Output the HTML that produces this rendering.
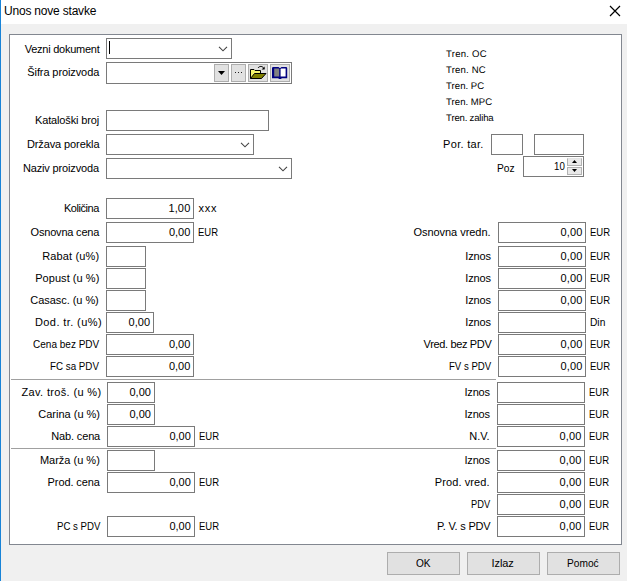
<!DOCTYPE html>
<html lang="sr"><head><meta charset="utf-8"><title>Unos nove stavke</title>
<style>
html,body{margin:0;padding:0}
body{width:627px;height:581px;overflow:hidden;background:#f0f0f0;position:relative;font-family:'Liberation Sans', sans-serif;color:#000}
.a{position:absolute;display:block}
.t{position:absolute;white-space:pre;line-height:20px;height:20px;transform-origin:0 0}
.f{position:absolute;box-sizing:border-box;background:#fff;border:1px solid #7a7a7a}
.b{position:absolute;box-sizing:border-box;background:#e1e1e1;border:1px solid #adadad}
.g{position:absolute;box-sizing:border-box;background:#d9d9d9;border:1px solid #e4e4e4}
.l{position:absolute;height:1px;background:#a0a0a0}
</style></head>
<body>
<div class="a" style="left:0;top:0;width:627px;height:24px;background:#fff"></div>
<div class="a" style="left:0;top:0;width:1px;height:581px;background:#1883d7"></div>
<svg class="a" style="left:608px;top:4px" width="14" height="14" viewBox="0 0 14 14"><path d="M2 2 L12 12 M12 2 L2 12" stroke="#000" stroke-width="1.2" fill="none"/></svg>
<div class="a" style="left:9px;top:34px;width:613px;height:511px;box-sizing:border-box;background:#fff;border:1px solid #828790"></div>
<div class="l" style="left:11px;top:379px;width:485px"></div>
<div class="l" style="left:11px;top:448px;width:485px"></div>
<div class="f" style="left:106px;top:38px;width:126px;height:21px"></div>
<svg class="a" style="left:218px;top:46px" width="10" height="6" viewBox="0 0 10 6"><path d="M1 0.8 L5 4.8 L9 0.8" fill="none" stroke="#444" stroke-width="1.1"/></svg>
<div class="f" style="left:106px;top:62px;width:186px;height:22px"></div>
<div class="f" style="left:106px;top:110px;width:163px;height:21px"></div>
<div class="f" style="left:106px;top:134px;width:148px;height:21px"></div>
<svg class="a" style="left:240px;top:142px" width="10" height="6" viewBox="0 0 10 6"><path d="M1 0.8 L5 4.8 L9 0.8" fill="none" stroke="#444" stroke-width="1.1"/></svg>
<div class="f" style="left:106px;top:158px;width:186px;height:21px"></div>
<svg class="a" style="left:278px;top:166px" width="10" height="6" viewBox="0 0 10 6"><path d="M1 0.8 L5 4.8 L9 0.8" fill="none" stroke="#444" stroke-width="1.1"/></svg>
<div class="f" style="left:106px;top:198px;width:88px;height:21px"></div>
<div class="f" style="left:106px;top:222px;width:88px;height:21px"></div>
<div class="f" style="left:106px;top:246px;width:40px;height:21px"></div>
<div class="f" style="left:106px;top:268px;width:40px;height:21px"></div>
<div class="f" style="left:106px;top:290px;width:40px;height:21px"></div>
<div class="f" style="left:106px;top:312px;width:48px;height:21px"></div>
<div class="f" style="left:106px;top:334px;width:88px;height:21px"></div>
<div class="f" style="left:106px;top:356px;width:88px;height:21px"></div>
<div class="f" style="left:107px;top:382px;width:48px;height:21px"></div>
<div class="f" style="left:107px;top:404px;width:48px;height:21px"></div>
<div class="f" style="left:107px;top:426px;width:88px;height:21px"></div>
<div class="f" style="left:107px;top:450px;width:48px;height:21px"></div>
<div class="f" style="left:107px;top:472px;width:88px;height:21px"></div>
<div class="f" style="left:107px;top:516px;width:88px;height:21px"></div>
<div class="f" style="left:498px;top:222px;width:88px;height:21px"></div>
<div class="f" style="left:498px;top:246px;width:88px;height:21px"></div>
<div class="f" style="left:498px;top:268px;width:88px;height:21px"></div>
<div class="f" style="left:498px;top:290px;width:88px;height:21px"></div>
<div class="f" style="left:498px;top:312px;width:88px;height:21px"></div>
<div class="f" style="left:498px;top:334px;width:88px;height:21px"></div>
<div class="f" style="left:498px;top:356px;width:88px;height:21px"></div>
<div class="f" style="left:497px;top:382px;width:88px;height:21px"></div>
<div class="f" style="left:497px;top:404px;width:88px;height:21px"></div>
<div class="f" style="left:497px;top:426px;width:88px;height:21px"></div>
<div class="f" style="left:497px;top:450px;width:88px;height:21px"></div>
<div class="f" style="left:497px;top:472px;width:88px;height:21px"></div>
<div class="f" style="left:497px;top:494px;width:88px;height:21px"></div>
<div class="f" style="left:497px;top:516px;width:88px;height:21px"></div>
<div class="f" style="left:491px;top:134px;width:32px;height:21px"></div>
<div class="f" style="left:534px;top:134px;width:50px;height:21px"></div>
<div class="f" style="left:523px;top:156px;width:61px;height:21px"></div>
<div class="g" style="left:567px;top:158px;width:15px;height:8px;background:#e9e9e9;border-color:#e4e4e4 #b2b2b2 #b2b2b2 #b2b2b2"></div>
<div class="g" style="left:567px;top:167px;width:15px;height:8px;background:#e9e9e9;border-color:#b2b2b2"></div>
<svg class="a" style="left:572px;top:160px" width="5" height="3" viewBox="0 0 5 3"><path d="M0 3 L2.5 0 L5 3Z" fill="#000"/></svg>
<svg class="a" style="left:572px;top:169px" width="5" height="3" viewBox="0 0 5 3"><path d="M0 0 L2.5 3 L5 0Z" fill="#000"/></svg>
<div class="a" style="left:109px;top:41px;width:1px;height:13px;background:#000"></div>
<div class="b" style="left:214px;top:64px;width:15px;height:18px"></div>
<svg class="a" style="left:218px;top:71px" width="7" height="4" viewBox="0 0 7 4"><path d="M0 0 L7 0 L3.5 4Z" fill="#000"/></svg>
<div class="b" style="left:231px;top:64px;width:15px;height:18px"></div>
<div class="a" style="left:235px;top:72px;width:1px;height:1px;background:#222;box-shadow:3px 0 0 #222,6px 0 0 #222"></div>
<div class="b" style="left:248px;top:64px;width:20px;height:18px"></div>
<svg class="a" style="left:248px;top:64px" width="20" height="18" viewBox="0 0 20 18"><path d="M2.5 14.5 V5.5 H6 L7 6.5 H12.5 V9.5" fill="#ffff80" stroke="#000" stroke-width="1"/><path d="M3 6.5 H6 L7 7.5 H12 V9.5 H6.5 L3 13.5Z" fill="#f4f46a"/><path d="M2.5 14.5 L6.5 9.5 H18 L13.5 14.5Z" fill="#808000" stroke="#000" stroke-width="1"/><path d="M10 4 C11.5 1.8 14.5 1.8 16 4.6" fill="none" stroke="#000" stroke-width="1"/><path d="M13.6 5.4 H16.6 V2.4Z" fill="#000"/></svg>
<div class="b" style="left:270px;top:64px;width:20px;height:18px"></div>
<svg class="a" style="left:270px;top:64px" width="20" height="18" viewBox="0 0 20 18"><path d="M2 4.2 Q2 3 3.2 3 H8 Q9.6 3 10 4.2 Q10.4 3 12 3 H16 Q17.2 3 17.2 4.2 V14.2 H12 L10.8 15 H9.2 L8 14.2 H2Z" fill="#000080"/><path d="M4.2 4.6 H8.6 Q9.2 4.6 9.2 5.2 V12.6 H4.2Z" fill="#808080"/><path d="M10.6 5.2 Q10.6 4.6 11.2 4.6 H15.6 V12.6 H10.6Z" fill="#fff"/><path d="M9.4 2.8 H10.6 V3.7 L10 4.1 L9.4 3.7Z" fill="#e1e1e1"/></svg>
<div class="b" style="left:387px;top:552px;width:73px;height:23px"></div>
<div class="b" style="left:467px;top:552px;width:73px;height:23px"></div>
<div class="b" style="left:547px;top:552px;width:73px;height:23px"></div>
<span class="t" style="left:4.0px;top:1px;font-size:12px;letter-spacing:-0.20px">Unos nove stavke</span>
<span class="t" style="left:24.7px;top:39px;font-size:11px;letter-spacing:-0.25px">Vezni dokument</span>
<span class="t" style="left:27.3px;top:62px;font-size:11px;letter-spacing:-0.10px">Šifra proizvoda</span>
<span class="t" style="left:35.0px;top:110px;font-size:11px;letter-spacing:-0.15px">Kataloški broj</span>
<span class="t" style="left:26.9px;top:134px;font-size:11px;letter-spacing:-0.10px">Država porekla</span>
<span class="t" style="left:22.9px;top:158px;font-size:11px;letter-spacing:-0.15px">Naziv proizvoda</span>
<span class="t" style="left:63.9px;top:198px;font-size:11px;letter-spacing:-0.45px">Količina</span>
<span class="t" style="left:30.6px;top:222px;font-size:11px;letter-spacing:-0.20px">Osnovna cena</span>
<span class="t" style="left:42.2px;top:246px;font-size:11px;letter-spacing:0.15px">Rabat (u%)</span>
<span class="t" style="left:35.2px;top:268px;font-size:11px;letter-spacing:0.05px">Popust (u %)</span>
<span class="t" style="left:30.3px;top:290px;font-size:11px;letter-spacing:-0.05px">Casasc. (u %)</span>
<span class="t" style="left:35.0px;top:312px;font-size:11px;letter-spacing:0.40px">Dod. tr. (u%)</span>
<span class="t" style="left:32.9px;top:334px;font-size:11px;transform:scaleX(0.911)">Cena bez PDV</span>
<span class="t" style="left:50.3px;top:356px;font-size:11px;transform:scaleX(0.889)">FC sa PDV</span>
<span class="t" style="left:21.5px;top:382px;font-size:11px;letter-spacing:0.35px">Zav. troš. (u %)</span>
<span class="t" style="left:38.3px;top:404px;font-size:11px">Carina (u %)</span>
<span class="t" style="left:51.3px;top:426px;font-size:11px;letter-spacing:-0.15px">Nab. cena</span>
<span class="t" style="left:39.9px;top:450px;font-size:11px">Marža (u %)</span>
<span class="t" style="left:47.6px;top:472px;font-size:11px;letter-spacing:-0.10px">Prod. cena</span>
<span class="t" style="left:57.3px;top:516px;font-size:11px;transform:scaleX(0.878)">PC s PDV</span>
<span class="t" style="left:413.5px;top:222px;font-size:11px;letter-spacing:-0.05px">Osnovna vredn.</span>
<span class="t" style="left:465.3px;top:246px;font-size:11px;letter-spacing:-0.15px">Iznos</span>
<span class="t" style="left:465.3px;top:268px;font-size:11px;letter-spacing:-0.15px">Iznos</span>
<span class="t" style="left:465.3px;top:290px;font-size:11px;letter-spacing:-0.15px">Iznos</span>
<span class="t" style="left:465.3px;top:312px;font-size:11px;letter-spacing:-0.15px">Iznos</span>
<span class="t" style="left:423.6px;top:334px;font-size:11px;letter-spacing:-0.35px">Vred. bez PDV</span>
<span class="t" style="left:449.3px;top:356px;font-size:11px;transform:scaleX(0.874)">FV s PDV</span>
<span class="t" style="left:464.4px;top:382px;font-size:11px;letter-spacing:-0.15px">Iznos</span>
<span class="t" style="left:464.4px;top:404px;font-size:11px;letter-spacing:-0.15px">Iznos</span>
<span class="t" style="left:469.3px;top:426px;font-size:11px;letter-spacing:-0.05px">N.V.</span>
<span class="t" style="left:464.4px;top:450px;font-size:11px;letter-spacing:-0.15px">Iznos</span>
<span class="t" style="left:434.8px;top:472px;font-size:11px;letter-spacing:0.10px">Prod. vred.</span>
<span class="t" style="left:471.4px;top:494px;font-size:11px;transform:scaleX(0.846)">PDV</span>
<span class="t" style="left:437.0px;top:516px;font-size:11px;letter-spacing:-0.20px">P. V. s PDV</span>
<span class="t" style="left:446.1px;top:44px;font-size:9.6px;transform:skewX(0.4deg);letter-spacing:0.20px">Tren. OC</span>
<span class="t" style="left:446.1px;top:60px;font-size:9.6px;transform:skewX(0.4deg);letter-spacing:0.15px">Tren. NC</span>
<span class="t" style="left:446.1px;top:76px;font-size:9.6px;transform:skewX(0.4deg)">Tren. PC</span>
<span class="t" style="left:446.1px;top:92px;font-size:9.6px;transform:skewX(0.4deg)">Tren. MPC</span>
<span class="t" style="left:446.1px;top:108px;font-size:9.6px;transform:skewX(0.4deg);letter-spacing:-0.20px">Tren. zaliha</span>
<span class="t" style="left:443.1px;top:134px;font-size:11px;letter-spacing:0.30px">Por. tar.</span>
<span class="t" style="left:496.8px;top:158px;font-size:11px;transform:scaleX(0.931)">Poz</span>
<span class="t" style="left:553.6px;top:156px;font-size:11px;transform:scaleX(0.883)">10</span>
<span class="t" style="left:168.4px;top:198px;font-size:11px;letter-spacing:0.15px">1,00</span>
<span class="t" style="left:168.9px;top:222px;font-size:11px">0,00</span>
<span class="t" style="left:168.9px;top:334px;font-size:11px">0,00</span>
<span class="t" style="left:168.9px;top:356px;font-size:11px">0,00</span>
<span class="t" style="left:128.6px;top:312px;font-size:11px">0,00</span>
<span class="t" style="left:129.5px;top:382px;font-size:11px">0,00</span>
<span class="t" style="left:129.5px;top:404px;font-size:11px">0,00</span>
<span class="t" style="left:169.4px;top:426px;font-size:11px">0,00</span>
<span class="t" style="left:169.4px;top:472px;font-size:11px">0,00</span>
<span class="t" style="left:169.4px;top:516px;font-size:11px">0,00</span>
<span class="t" style="left:198.5px;top:198px;font-size:11px;letter-spacing:0.80px">xxx</span>
<span class="t" style="left:197.8px;top:222px;font-size:11px;transform:scaleX(0.864)">EUR</span>
<span class="t" style="left:198.8px;top:426px;font-size:11px;transform:scaleX(0.864)">EUR</span>
<span class="t" style="left:198.8px;top:472px;font-size:11px;transform:scaleX(0.864)">EUR</span>
<span class="t" style="left:198.8px;top:516px;font-size:11px;transform:scaleX(0.864)">EUR</span>
<span class="t" style="left:560.4px;top:222px;font-size:11px;letter-spacing:0.20px">0,00</span>
<span class="t" style="left:560.4px;top:246px;font-size:11px;letter-spacing:0.20px">0,00</span>
<span class="t" style="left:560.4px;top:268px;font-size:11px;letter-spacing:0.20px">0,00</span>
<span class="t" style="left:560.4px;top:290px;font-size:11px;letter-spacing:0.20px">0,00</span>
<span class="t" style="left:560.4px;top:334px;font-size:11px;letter-spacing:0.20px">0,00</span>
<span class="t" style="left:560.4px;top:356px;font-size:11px;letter-spacing:0.20px">0,00</span>
<span class="t" style="left:559.4px;top:426px;font-size:11px;letter-spacing:0.20px">0,00</span>
<span class="t" style="left:559.4px;top:450px;font-size:11px;letter-spacing:0.20px">0,00</span>
<span class="t" style="left:559.4px;top:472px;font-size:11px;letter-spacing:0.20px">0,00</span>
<span class="t" style="left:559.4px;top:494px;font-size:11px;letter-spacing:0.20px">0,00</span>
<span class="t" style="left:559.4px;top:516px;font-size:11px;letter-spacing:0.20px">0,00</span>
<span class="t" style="left:589.8px;top:222px;font-size:11px;transform:scaleX(0.864)">EUR</span>
<span class="t" style="left:589.8px;top:246px;font-size:11px;transform:scaleX(0.864)">EUR</span>
<span class="t" style="left:589.8px;top:268px;font-size:11px;transform:scaleX(0.864)">EUR</span>
<span class="t" style="left:589.8px;top:290px;font-size:11px;transform:scaleX(0.864)">EUR</span>
<span class="t" style="left:589.8px;top:334px;font-size:11px;transform:scaleX(0.864)">EUR</span>
<span class="t" style="left:589.8px;top:356px;font-size:11px;transform:scaleX(0.864)">EUR</span>
<span class="t" style="left:589.8px;top:312px;font-size:11px;transform:scaleX(0.928)">Din</span>
<span class="t" style="left:588.8px;top:382px;font-size:11px;transform:scaleX(0.864)">EUR</span>
<span class="t" style="left:588.8px;top:404px;font-size:11px;transform:scaleX(0.864)">EUR</span>
<span class="t" style="left:588.8px;top:426px;font-size:11px;transform:scaleX(0.864)">EUR</span>
<span class="t" style="left:588.8px;top:450px;font-size:11px;transform:scaleX(0.864)">EUR</span>
<span class="t" style="left:588.8px;top:472px;font-size:11px;transform:scaleX(0.864)">EUR</span>
<span class="t" style="left:588.8px;top:494px;font-size:11px;transform:scaleX(0.864)">EUR</span>
<span class="t" style="left:588.8px;top:516px;font-size:11px;transform:scaleX(0.864)">EUR</span>
<span class="t" style="left:415.6px;top:553px;font-size:11px;transform:scaleX(0.918)">OK</span>
<span class="t" style="left:491.6px;top:553px;font-size:11px;letter-spacing:-0.10px">Izlaz</span>
<span class="t" style="left:567.1px;top:553px;font-size:11px;transform:scaleX(0.924)">Pomoć</span>
</body></html>
